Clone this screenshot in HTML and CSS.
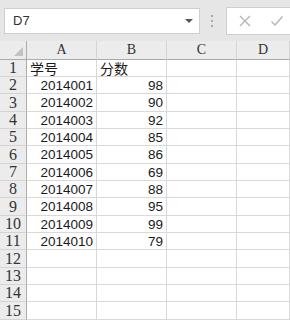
FILE: index.html
```html
<!DOCTYPE html>
<html lang="zh-CN">
<head>
    <meta charset="UTF-8">
    <title>Sheet</title>
    <link rel="stylesheet" href="styles.css">
</head>
<body>
    <div class="toolbar">
        <div class="name-box">
            <span>D7</span>
            <span class="arrow"></span>
        </div>
        <div class="dots">
            <i></i><i></i><i></i>
        </div>
        <div class="formula-box">
            <svg class="tool" width="14" height="14" viewBox="0 0 14 14"><path d="M2 2 L12 12 M12 2 L2 12" stroke="#b4b4b4" stroke-width="1.4" fill="none"/></svg>
            <svg class="tool" width="14" height="14" viewBox="0 0 14 14"><path d="M1.5 7.5 L5 11 L12.5 2.5" stroke="#b4b4b4" stroke-width="1.4" fill="none"/></svg>
        </div>
    </div>

    <div class="sheet" id="sheet">
        <div class="corner"><span class="tri"></span></div>
        <div class="col-head">A</div>
        <div class="col-head">B</div>
        <div class="col-head">C</div>
        <div class="col-head">D</div>
    </div>

    <script>
        const rows = [
            ["学号", "分数"],
            ["2014001", "98"],
            ["2014002", "90"],
            ["2014003", "92"],
            ["2014004", "85"],
            ["2014005", "86"],
            ["2014006", "69"],
            ["2014007", "88"],
            ["2014008", "95"],
            ["2014009", "99"],
            ["2014010", "79"]
        ];
        const sheet = document.getElementById("sheet");

        for (let i = 0; i < 15; i++) {
            const head = document.createElement("div");
            head.className = "row-head";
            head.textContent = i + 1;
            sheet.appendChild(head);

            const data = rows[i] || [];
            for (let c = 0; c < 4; c++) {
                const cell = document.createElement("div");
                cell.className = "cell";
                if (data[c] !== undefined) {
                    cell.textContent = data[c];
                    if (i === 0) cell.classList.add("text");
                    else cell.classList.add("num");
                }
                sheet.appendChild(cell);
            }
        }
    </script>
</body>
</html>
```

FILE: styles.css
```css
body {
    margin: 0;
    padding: 0;
    width: 290px;
    height: 322px;
    overflow: hidden;
    background: #ffffff;
    font-family: "Liberation Sans", "Noto Sans CJK SC", sans-serif;
}

.toolbar {
    display: flex;
    align-items: center;
    height: 41px;
    padding: 0 0 0 4px;
    background: #e6e6e6;
    box-sizing: border-box;
}
.name-box {
    display: flex;
    align-items: center;
    justify-content: space-between;
    width: 196px;
    height: 26px;
    padding: 0 6px 0 8px;
    box-sizing: border-box;
    background: white;
    border: 1px solid #cfcfcf;
    font-size: 13px;
    color: #333;
}
.arrow {
    width: 0;
    height: 0;
    border-left: 4px solid transparent;
    border-right: 4px solid transparent;
    border-top: 4px solid #555;
}
.dots {
    display: flex;
    flex-direction: column;
    gap: 3px;
    margin: 0 13px 0 11px;
}
.dots i {
    width: 2px;
    height: 2px;
    background: #a8a8a8;
}
.formula-box {
    display: flex;
    align-items: center;
    gap: 18px;
    flex: 1;
    height: 26px;
    padding-left: 11px;
    background: white;
    border: 1px solid #cfcfcf;
    border-right: none;
}

.sheet {
    display: grid;
    grid-template-columns: 27px 70px 70px 70px 1fr;
    grid-template-rows: 19px repeat(5, 17px 17px 18px);
    font-size: 13.5px;
    color: #1a1a1a;
}
.corner,
.col-head,
.row-head {
    background: #ececec;
    box-sizing: border-box;
}
.corner {
    position: relative;
    border-right: 1px solid #ababab;
    border-bottom: 1px solid #ababab;
}
.tri {
    position: absolute;
    right: 3px;
    bottom: 3px;
    width: 0;
    height: 0;
    border-left: 9px solid transparent;
    border-bottom: 9px solid #c2c2c2;
}
.col-head {
    display: flex;
    align-items: center;
    justify-content: center;
    border-right: 1px solid #d4d4d4;
    border-bottom: 1px solid #ababab;
    font-family: "Liberation Serif", serif;
    font-size: 14px;
    color: #333;
}
.row-head {
    display: flex;
    align-items: center;
    justify-content: center;
    border-right: 1px solid #ababab;
    border-bottom: 1px solid #d4d4d4;
    font-family: "Liberation Serif", serif;
    font-size: 16px;
    color: #333;
}
.cell {
    display: flex;
    align-items: center;
    padding: 0 3px;
    box-sizing: border-box;
    border-right: 1px solid #d9d9d9;
    border-bottom: 1px solid #d9d9d9;
    white-space: nowrap;
}
.cell.text {
    font-size: 14px;
    font-family: "Noto Sans CJK SC", sans-serif;
}
.cell.num {
    justify-content: flex-end;
}
```
